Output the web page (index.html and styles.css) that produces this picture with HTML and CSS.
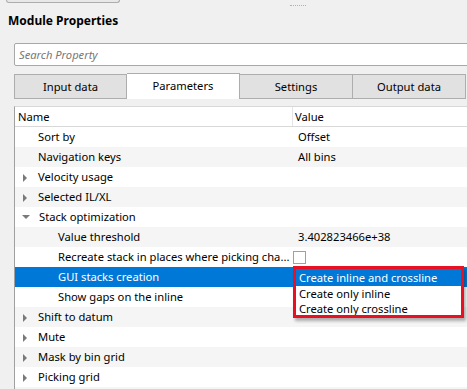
FILE: index.html
```html
<!DOCTYPE html>
<html>
<head>
<meta charset="utf-8">
<title>Module Properties</title>
<link rel="stylesheet" href="styles.css">
</head>
<body>
<div class="top-bar">
  <div class="tool-btn"></div>
  <div class="grip"></div>
</div>
<div class="title">Module Properties</div>
<div class="panel">
  <div class="search"><span class="placeholder">Search Property</span></div>
  <div class="tabs">
    <div class="tab">Input data</div>
    <div class="tab active">Parameters</div>
    <div class="tab">Settings</div>
    <div class="tab">Output data</div>
  </div>
  <div class="tree">
    <div class="row head">
      <div class="cell name">Name</div>
      <div class="cell value">Value</div>
    </div>
    <div class="row">
      <div class="cell name lvl1">Sort by</div>
      <div class="cell value">Offset</div>
    </div>
    <div class="row alt">
      <div class="cell name lvl1">Navigation keys</div>
      <div class="cell value">All bins</div>
    </div>
    <div class="row">
      <div class="cell name lvl1"><span class="arrow"></span>Velocity usage</div>
      <div class="cell value"></div>
    </div>
    <div class="row alt">
      <div class="cell name lvl1"><span class="arrow"></span>Selected IL/XL</div>
      <div class="cell value"></div>
    </div>
    <div class="row">
      <div class="cell name lvl1"><span class="arrow open"></span>Stack optimization</div>
      <div class="cell value"></div>
    </div>
    <div class="row alt">
      <div class="cell name lvl2">Value threshold</div>
      <div class="cell value">3.402823466e+38</div>
    </div>
    <div class="row">
      <div class="cell name lvl2">Recreate stack in places where picking cha...</div>
      <div class="cell value"><span class="check"></span></div>
    </div>
    <div class="row selected">
      <div class="cell name lvl2">GUI stacks creation</div>
      <div class="cell value"></div>
    </div>
    <div class="row">
      <div class="cell name lvl2">Show gaps on the inline</div>
      <div class="cell value"></div>
    </div>
    <div class="row alt">
      <div class="cell name lvl1"><span class="arrow"></span>Shift to datum</div>
      <div class="cell value"></div>
    </div>
    <div class="row">
      <div class="cell name lvl1"><span class="arrow"></span>Mute</div>
      <div class="cell value"></div>
    </div>
    <div class="row alt">
      <div class="cell name lvl1"><span class="arrow"></span>Mask by bin grid</div>
      <div class="cell value"></div>
    </div>
    <div class="row">
      <div class="cell name lvl1"><span class="arrow"></span>Picking grid</div>
      <div class="cell value"></div>
    </div>
    <div class="row alt">
      <div class="cell name lvl1"></div>
      <div class="cell value"></div>
    </div>

    <div class="popup">
      <div class="opt current">Create inline and crossline</div>
      <div class="opt">Create only inline</div>
      <div class="opt">Create only crossline</div>
    </div>
  </div>
</div>
</body>
</html>
```

FILE: styles.css
```css
html, body {
	margin: 0;
	padding: 0;
	width: 100%;
	height: 100%;
	overflow: hidden;
	background: #f0f0f0;
	font-family: "Noto Sans", "Open Sans", sans-serif;
	font-size: 11.2px;
	color: #000;
}

.top-bar {
	display: flex;
	height: 14px;
}

.tool-btn {
	margin-left: 6px;
	width: 112px;
	height: 2px;
	border: 1px solid #adadad;
	border-top: none;
	border-radius: 0 0 4px 4px;
	background: #e8e8e8;
}

.grip {
	margin-left: 170px;
	margin-top: 5px;
	width: 16px;
	height: 0;
	border-top: 1px dotted #b0b0b0;
}

.title {
	padding-left: 8px;
	font-weight: bold;
	font-size: 12px;
	line-height: 14px;
	height: 29px;
}

.panel {
	position: relative;
	margin-left: 14px;
	width: 520px;
}

.search {
	box-sizing: border-box;
	height: 23px;
	background: #fff;
	border: 1px solid #a8a8a8;
	border-radius: 2px;
	padding: 0 4px;
	line-height: 21px;
}

.placeholder {
	color: #777;
	font-style: italic;
}

.tabs {
	display: flex;
	align-items: flex-end;
	height: 26px;
	margin-top: 7px;
}

.tab {
	box-sizing: border-box;
	width: 113px;
	height: 25px;
	line-height: 24px;
	text-align: center;
	background: #e1e1e1;
	border: 1px solid #adadad;
	border-left: none;
}

.tab:first-child {
	border-left: 1px solid #adadad;
}

.tab.active {
	height: 26px;
	line-height: 23px;
	background: #fff;
	border-bottom: none;
}

.tree {
	position: relative;
	margin-top: 7px;
	background: #fff;
	border-top: 1px solid #d8d8d8;
	border-left: 1px solid #a0a0a0;
}

.row {
	display: flex;
	height: 20px;
	line-height: 20px;
	white-space: nowrap;
}

.row.alt {
	background: #f5f5f5;
}

.row.selected {
	background: #0078d7;
	color: #fff;
}

.row.head {
	height: 19px;
	line-height: 19px;
	border-bottom: 1px solid #d8d8d8;
	background: #fff;
}

.cell {
	box-sizing: border-box;
	overflow: hidden;
}

.name {
	width: 278px;
	padding-left: 3px;
}

.head .name {
	border-right: 1px solid #e5e5e5;
}

.value {
	flex: 1;
	padding-left: 5px;
}

.head .value {
	padding-left: 2px;
}

.lvl1 {
	padding-left: 23px;
}

.lvl2 {
	padding-left: 43px;
}

.arrow {
	display: inline-block;
	width: 0;
	height: 0;
	margin-left: -15px;
	margin-right: 11px;
	border-left: 4px solid #7a7a7a;
	border-top: 4px solid transparent;
	border-bottom: 4px solid transparent;
	vertical-align: -1px;
}

.arrow.open {
	margin-left: -16px;
	margin-right: 9px;
	border-left: 4px solid transparent;
	border-right: 4px solid transparent;
	border-top: 4px solid #7a7a7a;
	border-bottom: none;
	vertical-align: 2px;
}

.check {
	display: inline-block;
	box-sizing: border-box;
	width: 13px;
	height: 13px;
	margin-left: -5px;
	border: 1px solid #a0a0a0;
	background: #fff;
	vertical-align: -3px;
}

.popup {
	position: absolute;
	left: 278px;
	top: 159px;
	width: 165px;
	height: 46px;
	overflow: hidden;
	background: #fff;
	border: 3px solid #e81123;
	box-shadow: 2px 3px 3px rgba(0,0,0,0.3);
}

.opt {
	height: 15px;
	line-height: 15px;
	padding-left: 3px;
	white-space: nowrap;
}

.opt.current {
	height: 17px;
	line-height: 17px;
	background: #0078d7;
	color: #fff;
}
```
